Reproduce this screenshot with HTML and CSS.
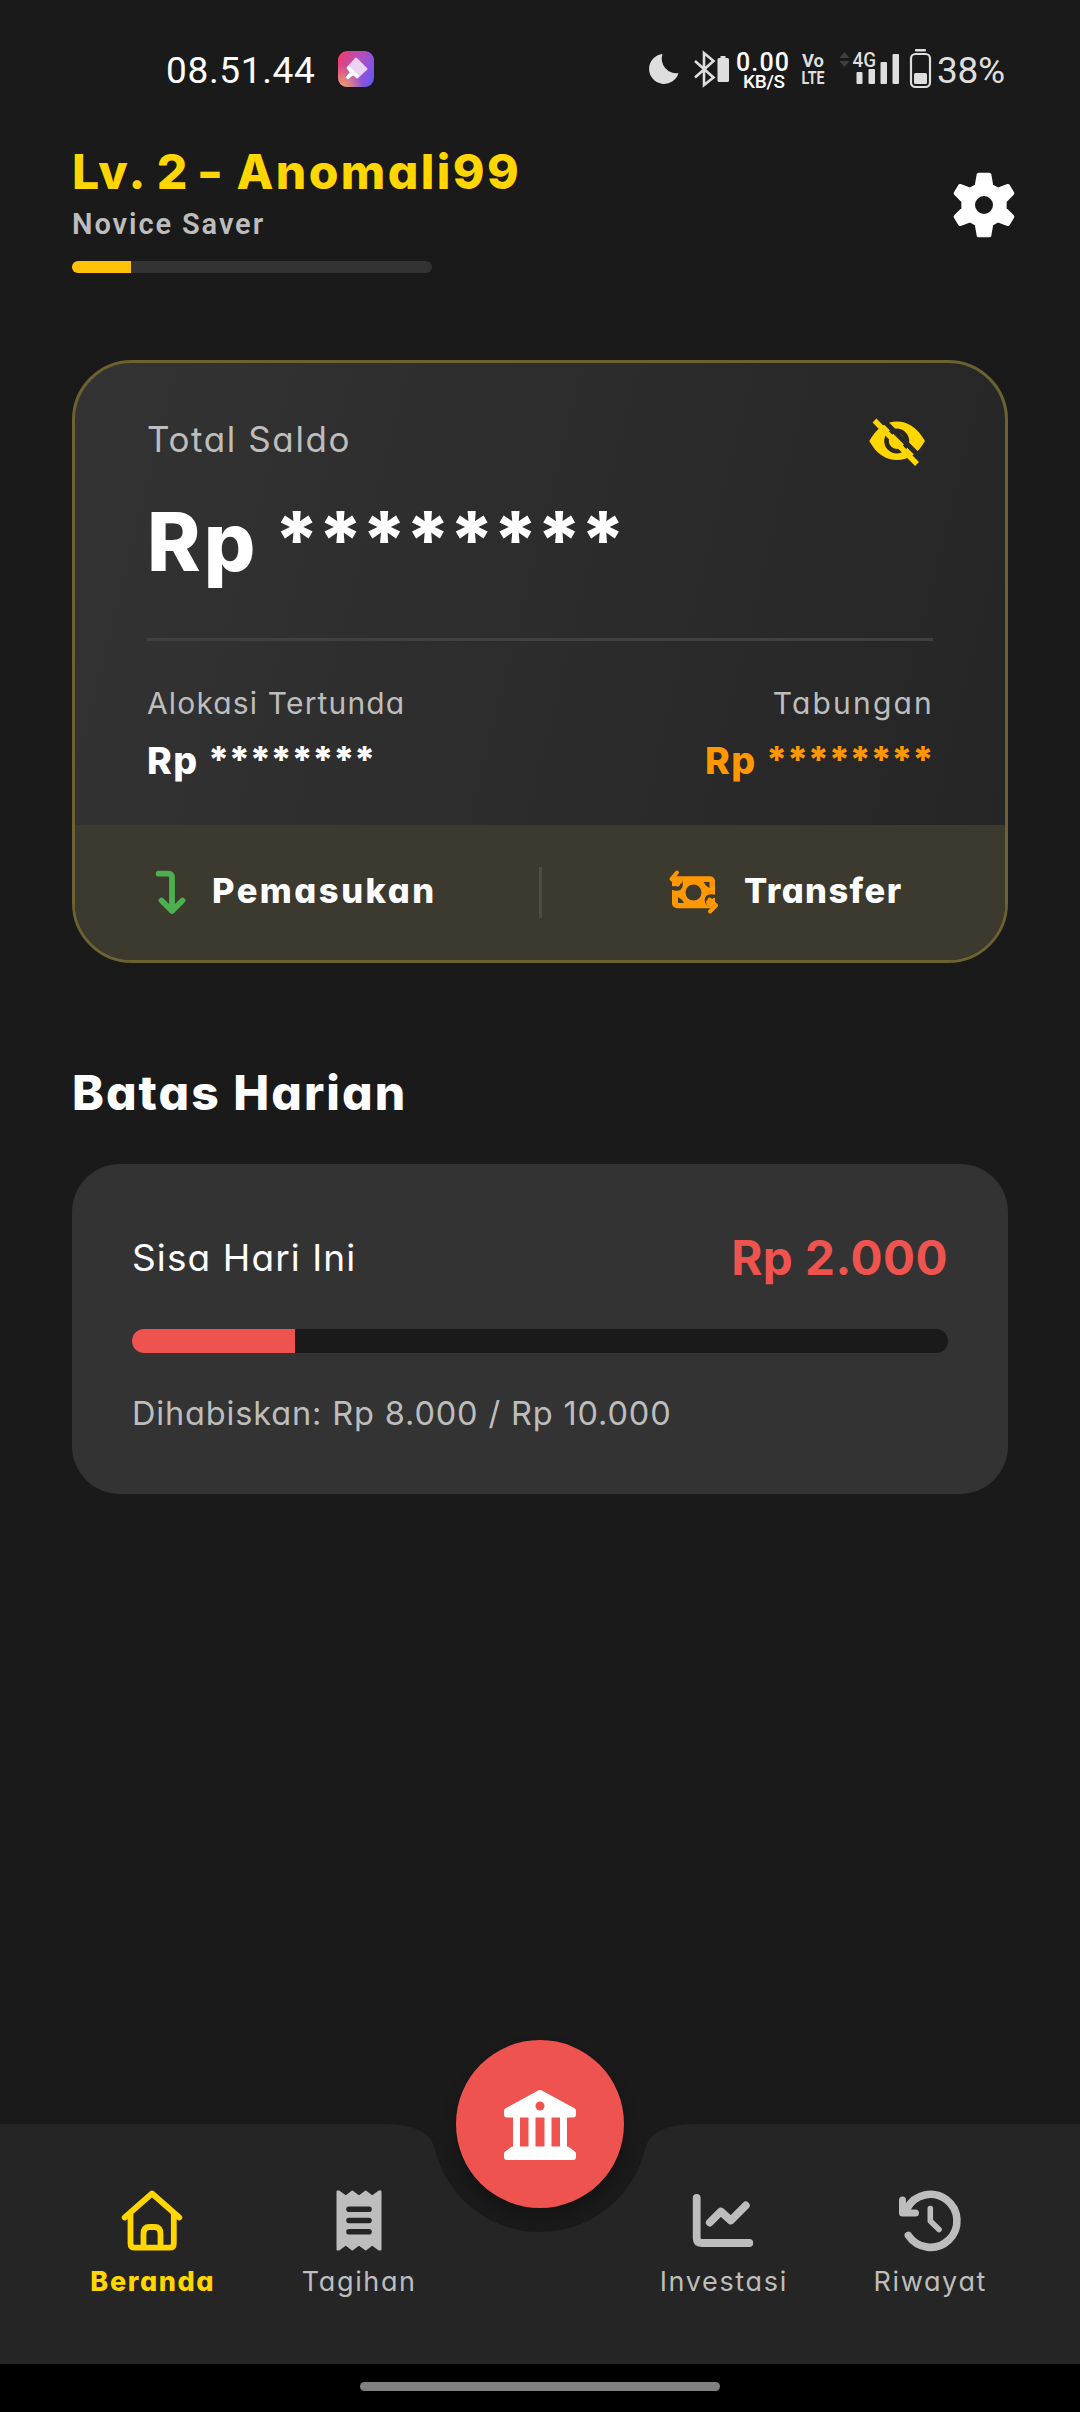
FILE: index.html
```html
<!DOCTYPE html>
<html lang="id">
<head>
<meta charset="utf-8">
<title>Beranda</title>
<link rel="stylesheet" href="styles.css">
</head>
<body>
<div class="phone">
  <div class="statusbar">
    <span class="clock">08.51.44</span>
    <svg class="app-badge" width="36" height="36" viewBox="0 0 36 36">
      <defs>
        <linearGradient id="badge" x1="0" y1="0.2" x2="1" y2="0.7"><stop offset="0" stop-color="#ee3f6f"/><stop offset="0.5" stop-color="#b44fc0"/><stop offset="1" stop-color="#6a57f0"/></linearGradient>
        <radialGradient id="glow" cx="0.1" cy="1" r="0.6"><stop offset="0" stop-color="#f5a060"/><stop offset="1" stop-color="#f5a060" stop-opacity="0"/></radialGradient>
      </defs>
      <rect width="36" height="36" rx="9" fill="url(#badge)"/>
      <rect width="36" height="36" rx="9" fill="url(#glow)"/>
      <path d="M18 7.5 28.5 18 19 26.5 9.500 17z" fill="#ecd3f3" stroke="#ecd3f3" stroke-width="2" stroke-linejoin="round"/>
      <path d="M10.500 15 21 25.500 19 27 16.500 24.500 14 24.500 10 28 8 26.500 12 21.500 9.500 17z" fill="#fff" stroke="#fff" stroke-linejoin="round"/>
    </svg>
    <svg class="indicators" width="366" height="48" viewBox="644 45 366 48">
      <g fill="#dedede">
        <path d="M662.500 54A15 15 0 1 0 678.500 73 14.500 14.500 0 0 1 662.500 54z"/>
        <path d="M695 61 713.500 77.500 704 85V53l9.500 8L695 77.500" fill="none" stroke="#dedede" stroke-width="2.600"/>
        <path d="M720.500 56h5v2h2q1.500 0 1.500 1.500V80.500q0 1.500-1.500 1.500h-8.500q-1.500 0-1.500-1.500V59.500q0-1.500 1.500-1.500h1.500z"/>
        <rect x="856.500" y="72" width="6" height="12" rx="1"/>
        <rect x="868.500" y="69" width="6.500" height="15" rx="1"/>
        <rect x="880.500" y="62" width="6.500" height="22" rx="1"/>
        <rect x="892.500" y="54" width="6.500" height="30" rx="1"/>
        <rect x="915" y="49" width="11" height="2.500" rx="1"/>
        <rect x="911" y="54" width="19" height="33" rx="4.500" fill="none" stroke="#dedede" stroke-width="2.200"/>
        <rect x="914" y="73" width="13" height="11" rx="1.500"/>
      </g>
      <path d="M844.500 52l5 6h-10zM844.500 67l5-6h-10z" fill="#3f3f3f"/>
      <g class="ind-text">
        <text x="736" y="70.500" font-size="25" textLength="53" fill="#fff">0.00</text>
        <text x="743" y="87.800" font-size="19" textLength="42" fill="#fff">KB/S</text>
        <text x="802" y="67" font-size="18" textLength="22" font-weight="700" lengthAdjust="spacingAndGlyphs">Vo</text>
        <text x="801.500" y="84" font-size="18.500" textLength="23" font-weight="700" lengthAdjust="spacingAndGlyphs">LTE</text>
        <text x="852.500" y="67" font-size="20" textLength="23.500" lengthAdjust="spacingAndGlyphs">4G</text>
        <text x="937" y="82.500" font-size="37" textLength="68" font-weight="400">38%</text>
      </g>
    </svg>
  </div>

  <header class="profile">
    <div class="profile-info">
      <div class="level">Lv. <span class="num">2</span> <span class="dash">-</span> Anomali99</div>
      <div class="rank">Novice Saver</div>
      <div class="xp"><div class="xp-fill" style="width:16.4%"></div></div>
    </div>
    <svg class="gear" width="68" height="68" viewBox="-102 -102 204 204">
      <path fill="#fff" fill-rule="evenodd" stroke="#fff" stroke-width="12" stroke-linejoin="round" d="M-16-91H16L22-57 42-46 72-57 85-35 62-12V12L85 35 72 57 42 46 22 57 16 91H-16L-22 57-42 46-72 57-85 35-62 12V-12L-85-35-72-57-42-46-22-57zM0-33A33 33 0 1 0 0 33 33 33 0 1 0 0-33z"/>
    </svg>
  </header>

  <section class="balance">
    <div class="balance-body">
      <div class="total-row">
        <span class="total-label">Total Saldo</span>
        <svg width="72" height="60" viewBox="861 412 72 60">
          <path fill="#ffd600" d="M869.300 441C877 427 887 421.500 897 421.500S917 427 925 441C917 455 907 460 897 460S877 455 869.300 441z"/>
          <circle cx="896.700" cy="441" r="10.200" fill="none" stroke="#292720" stroke-width="4.600"/>
          <path d="M881.500 418.500 922 459" stroke="#292828" stroke-width="5"/>
          <path d="M874.500 420.500 917 464" stroke="#ffd600" stroke-width="5.400"/>
        </svg>
      </div>
      <div class="amount"><span class="cur">Rp</span><span class="mask">********</span></div>
      <div class="rule"></div>
      <div class="split">
        <div>
          <div class="sub-label">Alokasi Tertunda</div>
          <div class="sub-value"><span class="cur">Rp</span><span class="mask">********</span></div>
        </div>
        <div class="right">
          <div class="sub-label">Tabungan</div>
          <div class="sub-value savings"><span class="cur">Rp</span><span class="mask">********</span></div>
        </div>
      </div>
    </div>
    <div class="actions">
      <div class="action income">
        <svg width="48" height="54" viewBox="147 865 48 54"><path d="M158.700 873.700H168Q172 873.700 172 877.700V910M161.500 900.500 172 911 182.500 900.500" fill="none" stroke="#4caf50" stroke-width="5.800" stroke-linecap="round" stroke-linejoin="round"/></svg>
        <span>Pemasukan</span>
      </div>
      <div class="action-sep"></div>
      <div class="action transfer">
        <svg width="54" height="54" viewBox="666 865 54 54">
          <rect x="672" y="876.300" width="43" height="32" rx="5" fill="#ff9800"/>
          <circle cx="693.500" cy="892.500" r="8" fill="#3c392f"/>
          <path d="M703.500 882h6v6q-4-2-6-6zM684 903h-6v-6q4 2 6 6z" fill="#3c392f"/>
          <path d="M668 879.500H676Q680.500 880 680.500 884.500T676 888.500 672 886M719 905H712Q707 904.500 707 900.500T711 896.500 715 898" fill="none" stroke="#3c392f" stroke-width="4.600"/>
          <path d="M677 872.500 671.500 879 678 884.500M710 911.500 716 905.500 709.500 899.500M671.500 879H677Q680 879.500 680 882M716 905.500H711Q708 905 708 902" fill="none" stroke="#ff9800" stroke-width="4" stroke-linecap="round" stroke-linejoin="round"/>
        </svg>
        <span>Transfer</span>
      </div>
    </div>
  </section>

  <h2 class="section-title">Batas Harian</h2>
  <section class="limit">
    <div class="limit-row"><span class="limit-label">Sisa Hari Ini</span><span class="limit-value">Rp 2.000</span></div>
    <div class="bar"><div class="bar-fill" style="width:20%"></div></div>
    <div class="spent">Dihabiskan: Rp 8.000 / Rp 10.000</div>
  </section>

  <nav class="tabs">
    <svg class="tabs-shape" width="1080" height="240" viewBox="0 0 1080 240"><path fill="#252525" d="M0 0H384Q429 0 434.900 24.900A108 108 0 0 0 645.100 24.900Q651 0 696 0H1080V240H0z"/></svg>
    <div class="tab active">
      <svg width="72" height="72" viewBox="116.500 2184 72 72"><g fill="none" stroke="#ffd600" stroke-width="5.800" stroke-linecap="round" stroke-linejoin="round"><path d="M125.200 2217.500 152.500 2193.500 179.800 2217.500M131 2213.500V2243.500Q131 2247.700 135.500 2247.700H170Q174.300 2247.700 174.300 2243.500V2213.500"/><path d="M144 2246V2234Q144 2227 150 2227H155Q161 2227 161 2234V2246"/></g></svg>
      <span>Beranda</span>
    </div>
    <div class="tab">
      <svg width="72" height="72" viewBox="323 2184 72 72"><path fill="#bdbdbd" stroke="#bdbdbd" stroke-width="2" stroke-linejoin="round" d="M337.500 2191.500 339 2191.500 345.800 2196.500 352.300 2191.500 359 2196.500 365.700 2191.500 372.200 2196.500 379 2191.500H380.500V2249.500H379L372.200 2244.500 365.700 2249.500 359 2244.500 352.300 2249.500 345.800 2244.500 339 2249.500H337.500z"/><path d="M349 2209.200H369M349 2220.500H369M349 2231.800H369" stroke="#252525" stroke-width="5.600" stroke-linecap="round"/></svg>
      <span>Tagihan</span>
    </div>
    <div class="tab-gap"></div>
    <div class="tab">
      <svg width="72" height="72" viewBox="686.700 2184 72 72"><path d="M696.400 2198V2238Q696.400 2243 701.500 2243H749M709.500 2222.500 720.500 2211.500 730.500 2220.500 745.500 2205.500" fill="none" stroke="#bdbdbd" stroke-width="7.800" stroke-linecap="round" stroke-linejoin="round"/></svg>
      <span>Investasi</span>
    </div>
    <div class="tab">
      <svg width="72" height="72" viewBox="893.500 2184 72 72"><g fill="none" stroke="#bdbdbd" stroke-linecap="round" stroke-linejoin="round"><path stroke-width="7.600" d="M907.900 2235.500A26.500 26.500 0 1 0 906.500 2208.500"/><path stroke-width="7" d="M902 2200V2213H915"/><path stroke-width="5.600" d="M929.800 2208.500V2221L938.500 2229.500"/></g><path fill="#bdbdbd" d="M901 2216V2203L914 2216z"/></svg>
      <span>Riwayat</span>
    </div>
    <div class="fab">
      <svg width="84" height="84" viewBox="498 2082 84 84"><path fill="#fff" stroke="#fff" stroke-width="6" stroke-linejoin="round" d="M540 2093 573 2111V2114.500H507V2111z"/><path fill="#fff" d="M513 2114h7v33h-7zM528.500 2114h7v33h-7zM544.500 2114h7v33h-7zM560 2114h7v33h-7z"/><path fill="#fff" stroke="#fff" stroke-width="6" stroke-linejoin="round" d="M513 2149.500H567L573 2154V2157H507V2154z"/><circle cx="540" cy="2106" r="4.500" fill="#ef5350"/></svg>
    </div>
  </nav>
  <div class="home-area"><div class="home-pill"></div></div>
</div>
</body>
</html>
```
FILE: styles.css
```css
* { box-sizing: border-box; }
body { margin: 0; background: #1a1a1a; color: #fff; font-family: Inter, "Noto Sans", sans-serif; font-feature-settings: "cv11"; }
svg { display: block; flex: none; }
.phone { width: 1080px; height: 2412px; display: flex; flex-direction: column; overflow: hidden; }

.statusbar { height: 136px; flex: none; display: flex; align-items: flex-start; padding: 45px 70px 0 166px; font-family: Roboto, sans-serif; }
.clock { width: 172px; font-size: 37px; line-height: 51px; letter-spacing: .65px; }
.app-badge { margin-top: 6px; }
.indicators { margin-left: auto; }
.ind-text { font-family: Roboto, sans-serif; font-weight: 500; fill: #dedede; }

.profile { display: flex; justify-content: space-between; padding: 0 62px 0 72px; }
.level { font-size: 48px; line-height: 71px; height: 70px; font-weight: 800; letter-spacing: 2.4px; color: #ffd600; white-space: nowrap; }
.num { margin: 0 -4px 0 -2px; }
.dash { display: inline-block; transform: scaleX(1.2); }
.rank { font: 600 29px/36px Roboto, sans-serif; letter-spacing: 1.9px; color: #bdbdbd; }
.xp { width: 360px; height: 12px; margin-top: 19px; border-radius: 6px; background: #333; overflow: hidden; }
.xp-fill { height: 100%; background: #ffc107; }
.gear { margin-top: 35px; }

.balance { margin: 87px 72px 0; height: 603px; border: 3px solid #6b6230; border-radius: 60px; background: linear-gradient(104deg, #333, #252525); overflow: hidden; }
.balance-body { height: 462px; padding: 49px 72px 0; }
.total-row { display: flex; justify-content: space-between; height: 60px; }
.total-label { font-size: 35px; line-height: 54px; letter-spacing: 1.6px; color: #bdbdbd; }
.cur, .mask { display: inline-block; }
.amount { margin-top: 16px; font-size: 78px; line-height: 108px; height: 108px; font-weight: 800; white-space: nowrap; }
.amount .cur { width: 127px; font-size: 81px; letter-spacing: 3px; }
.amount .mask { letter-spacing: -1.7px; transform: translateY(-3px); }
.rule { height: 3px; margin-top: 42px; background: #404040; }
.split { display: flex; justify-content: space-between; margin-top: 40px; }
.right { text-align: right; }
.sub-label { font-size: 30px; line-height: 44px; letter-spacing: 1.15px; color: #bdbdbd; }
.right .sub-label { letter-spacing: 2.2px; margin-right: -1px; }
.sub-value { margin-top: 9px; font-size: 36.5px; line-height: 54px; font-weight: 800; white-space: nowrap; }
.sub-value .cur { width: 61px; font-size: 37.5px; letter-spacing: 1.4px; text-align: left; }
.sub-value .mask { letter-spacing: -.4px; transform: translateY(-1px); }
.savings { color: #ff9800; }
.actions { height: 135px; display: flex; align-items: center; background: #3c392f; }
.action { flex: none; width: 463.5px; display: flex; align-items: center; font-size: 34.5px; line-height: 54px; font-weight: 800; letter-spacing: 2.5px; }
.action svg { margin-top: -1px; }
.action span { margin-top: -3px; }
.income { padding-left: 72px; gap: 17px; }
.transfer { padding-left: 124.5px; gap: 24px; letter-spacing: 1.4px; }
.action-sep { width: 3px; height: 51px; background: #504d3e; }

.section-title { margin: 94px 72px 0; font-size: 48px; line-height: 72px; font-weight: 800; letter-spacing: 2.05px; }
.limit { margin: 35px 72px 0; height: 330px; padding: 58px 60px 0; border-radius: 48px; background: #333; }
.limit-row { display: flex; justify-content: space-between; line-height: 72px; }
.limit-label { font-size: 37px; letter-spacing: 1.1px; }
.limit-value { font-size: 47.5px; font-weight: 700; letter-spacing: .5px; color: #ef5350; }
.bar { height: 24px; margin-top: 35px; border-radius: 12px; background: #1a1a1a; overflow: hidden; }
.bar-fill { height: 100%; background: #ef5350; }
.spent { margin-top: 37px; font-size: 32.5px; line-height: 48px; letter-spacing: .85px; color: #bdbdbd; white-space: nowrap; }

.tabs { position: relative; margin-top: auto; height: 240px; display: grid; grid-template-columns: 206.5px 206.5px 158px 206.5px 206.5px; padding: 60px 0 0 49px; }
.tabs-shape { position: absolute; left: 0; top: 0; }
.tab { position: relative; display: flex; flex-direction: column; align-items: center; gap: 6px; font-size: 27px; line-height: 40px; letter-spacing: 1.65px; color: #bdbdbd; }
.tab span { margin-right: -1px; }
.tab.active { font-weight: 800; letter-spacing: 1.6px; color: #ffd600; }
.fab { position: absolute; left: 456px; top: -84px; width: 168px; height: 168px; border-radius: 50%; background: #ef5350; box-shadow: 0 9px 15px rgba(0, 0, 0, .25); display: grid; place-items: center; }
.home-area { height: 48px; flex: none; padding-top: 18px; background: #000; }
.home-pill { width: 360px; height: 9px; margin: 0 auto; border-radius: 5px; background: #808080; }
```
